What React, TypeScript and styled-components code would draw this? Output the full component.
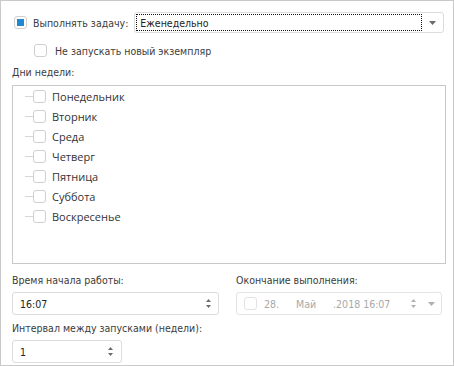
import styled, { createGlobalStyle } from "styled-components";

const GlobalStyle = createGlobalStyle`
    html, body {
        margin: 0;
        padding: 0;
        background: #ffffff;
    }
    * {
        box-sizing: border-box;
    }
`;

const palette = {
    border: "#c9c9c9",
    inputBorder: "#dcdcdc",
    text: "#333333",
    label: "#3c3c3c",
    disabled: "#a8a8a8",
    blue: "#1e88d2",
    arrow: "#6a6a6a",
};

const Panel = styled.div`
    width: 454px;
    height: 366px;
    border: 1px solid ${palette.border};
    padding: 11px 9px 0 11px;
    font-family: "DejaVu Sans Condensed", "DejaVu Sans", sans-serif;
    font-size: 10.5px;
    color: ${palette.label};
    display: flex;
    flex-direction: column;
`;

const Row = styled.div<{ $indent?: number; $top?: number; $height?: number }>`
    display: flex;
    align-items: center;
    padding-left: ${(p) => p.$indent || 0}px;
    margin-top: ${(p) => p.$top || 0}px;
    height: ${(p) => p.$height || 20}px;
`;

const Box = styled.span<{ $disabled?: boolean }>`
    width: 13px;
    height: 13px;
    border: 1px solid ${(p) => (p.$disabled ? "#e2e2e2" : "#cfcfcf")};
    border-radius: 3px;
    background: #fff;
    display: inline-flex;
    align-items: center;
    justify-content: center;
    flex-shrink: 0;
`;

const Mark = styled.span`
    width: 7px;
    height: 7px;
    background: ${palette.blue};
`;

const Label = styled.span<{ $gap?: number }>`
    margin-left: ${(p) => p.$gap || 0}px;
    white-space: nowrap;
`;

const Select = styled.div`
    flex: 1;
    margin-left: 6px;
    height: 21px;
    border: 1px solid ${palette.inputBorder};
    border-radius: 3px;
    display: flex;
    align-items: center;
    padding: 1px;
`;

const FocusValue = styled.div`
    flex: 1;
    height: 17px;
    border: 1px dotted #111;
    display: flex;
    align-items: center;
    padding-left: 3px;
    color: #222;
`;

const ArrowCell = styled.div<{ $width?: number }>`
    width: ${(p) => p.$width || 20}px;
    display: flex;
    align-items: center;
    justify-content: center;
    flex-shrink: 0;
`;

const Caption = styled.div<{ $top?: number }>`
    margin-top: ${(p) => p.$top || 0}px;
    height: 16px;
    line-height: 16px;
    white-space: nowrap;
`;

const ListBox = styled.div`
    margin-top: 5px;
    width: 434px;
    height: 179px;
    border: 1px solid ${palette.border};
`;

const DayRow = styled.div`
    height: 20px;
    display: flex;
    align-items: center;
    padding-left: 12px;
    font-family: "Open Sans", "Noto Sans", sans-serif;
    font-size: 11px;
    color: ${palette.text};
`;

const TreeLine = styled.span`
    width: 8px;
    height: 1px;
    background: #d6d6d6;
    flex-shrink: 0;
`;

const Columns = styled.div`
    display: flex;
    gap: 17px;
    margin-top: 8px;
`;

const Column = styled.div<{ $width: number }>`
    width: ${(p) => p.$width}px;
    display: flex;
    flex-direction: column;
`;

const Input = styled.div<{ $width?: number; $disabled?: boolean }>`
    margin-top: 4px;
    width: ${(p) => (p.$width ? `${p.$width}px` : "100%")};
    height: 23px;
    border: 1px solid ${(p) => (p.$disabled ? "#e4e4e4" : palette.inputBorder)};
    border-radius: 3px;
    display: flex;
    align-items: center;
    padding-left: 7px;
    color: ${(p) => (p.$disabled ? palette.disabled : "#222")};
`;

const Value = styled.span`
    flex: 1;
    white-space: nowrap;
`;

const DatePart = styled.span<{ $gap?: number }>`
    margin-left: ${(p) => p.$gap || 0}px;
    white-space: nowrap;
`;

const Spin = ({ color = palette.arrow }: { color?: string }) => (
    <svg width="7" height="11" viewBox="0 0 7 11">
        <path d="M3.5 1 L6 4 L1 4 Z" fill={color} />
        <path d="M3.5 10 L6 7 L1 7 Z" fill={color} />
    </svg>
);

const Caret = ({ color = palette.arrow }: { color?: string }) => (
    <svg width="7" height="4" viewBox="0 0 7 4">
        <path d="M0 0 L7 0 L3.5 4 Z" fill={color} />
    </svg>
);

const days = ["Понедельник", "Вторник", "Среда", "Четверг", "Пятница", "Суббота", "Воскресенье"];

export default function App() {
    return (
        <>
            <GlobalStyle />
            <Panel>
                <Row $indent={2} $height={21}>
                    <Box>
                        <Mark />
                    </Box>
                    <Label $gap={6}>Выполнять задачу:</Label>
                    <Select>
                        <FocusValue>Еженедельно</FocusValue>
                        <ArrowCell $width={20}>
                            <Caret />
                        </ArrowCell>
                    </Select>
                </Row>
                <Row $indent={22} $top={9} $height={17}>
                    <Box />
                    <Label $gap={8}>Не запускать новый экземпляр</Label>
                </Row>
                <Caption $top={5}>Дни недели:</Caption>
                <ListBox>
                    {days.map((day) => (
                        <DayRow key={day}>
                            <TreeLine />
                            <Box />
                            <Label $gap={6}>{day}</Label>
                        </DayRow>
                    ))}
                </ListBox>
                <Columns>
                    <Column $width={207}>
                        <Caption>Время начала работы:</Caption>
                        <Input>
                            <Value>16:07</Value>
                            <ArrowCell $width={20}>
                                <Spin />
                            </ArrowCell>
                        </Input>
                    </Column>
                    <Column $width={206}>
                        <Caption>Окончание выполнения:</Caption>
                        <Input $disabled>
                            <Box $disabled />
                            <DatePart $gap={7}>28.</DatePart>
                            <DatePart $gap={17}>Май</DatePart>
                            <DatePart $gap={17}>.2018 16:07</DatePart>
                            <Value />
                            <ArrowCell $width={16}>
                                <Spin color="#b0b0b0" />
                            </ArrowCell>
                            <ArrowCell $width={20}>
                                <Caret color="#b0b0b0" />
                            </ArrowCell>
                        </Input>
                    </Column>
                </Columns>
                <Caption $top={5}>Интервал между запусками (недели):</Caption>
                <Input $width={110}>
                    <Value>1</Value>
                    <ArrowCell $width={22}>
                        <Spin />
                    </ArrowCell>
                </Input>
            </Panel>
        </>
    );
}
